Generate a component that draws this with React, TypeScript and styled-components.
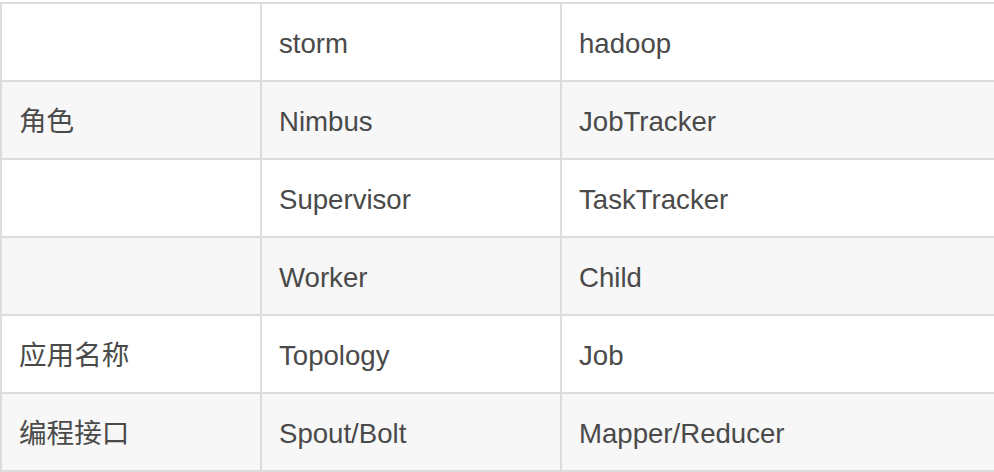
import React from 'react'
import styled, { createGlobalStyle } from 'styled-components'

const GlobalStyle = createGlobalStyle`
  html, body {
    margin: 0;
    padding: 0;
    background: #ffffff;
    overflow: hidden;
  }
`

const Wrapper = styled.div`
  width: 994px;
  height: 472px;
  padding-top: 2px;
  box-sizing: border-box;
  overflow: hidden;
`

const Table = styled.table`
  width: 1020px;
  table-layout: fixed;
  border-collapse: separate;
  border-spacing: 0;
  border-bottom: 2px solid #dddddd;
  font-family: "Liberation Sans", Arial, "Noto Sans CJK SC", sans-serif;
  font-size: 27.6px;
  color: #4a4a4a;
`

const Row = styled.tr<{ $striped?: boolean }>`
  background: ${p => (p.$striped ? '#f7f7f7' : '#ffffff')};
`

const Cell = styled.td<{ $width?: number }>`
  box-sizing: border-box;
  width: ${p => (p.$width ? `${p.$width}px` : 'auto')};
  height: 78px;
  padding: 3px 16px 0 17px;
  border-left: 2px solid #dddddd;
  border-top: 2px solid #dddddd;
  vertical-align: middle;
  white-space: nowrap;
  line-height: 1;
`

const rows: [string, string, string][] = [
  ['', 'storm', 'hadoop'],
  ['角色', 'Nimbus', 'JobTracker'],
  ['', 'Supervisor', 'TaskTracker'],
  ['', 'Worker', 'Child'],
  ['应用名称', 'Topology', 'Job'],
  ['编程接口', 'Spout/Bolt', 'Mapper/Reducer'],
]

const App = () => {
  return (
    <Wrapper>
      <GlobalStyle />
      <Table>
        <tbody>
          {rows.map((r, i) => (
            <Row key={i} $striped={i % 2 === 1}>
              <Cell $width={260}>{r[0]}</Cell>
              <Cell $width={300}>{r[1]}</Cell>
              <Cell>{r[2]}</Cell>
            </Row>
          ))}
        </tbody>
      </Table>
    </Wrapper>
  )
}

export default App
